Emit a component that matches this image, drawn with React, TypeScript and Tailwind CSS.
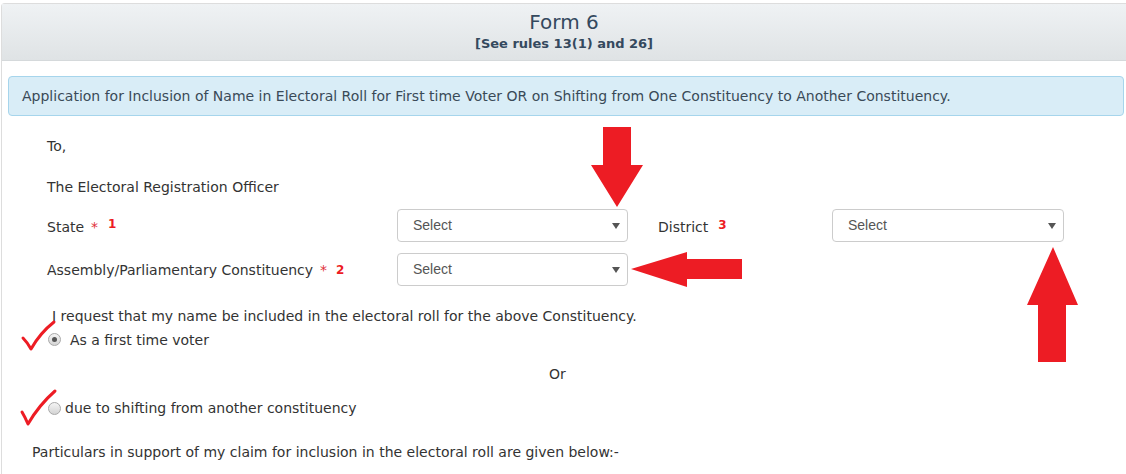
import React from 'react'

const RED = '#ed1c24'

function SelectBox({ width }: { width: string }) {
  return (
    <div className={`${width} h-[33px] rounded-[4px] border border-[#cccccc] bg-white flex items-center justify-between pl-[15px] pr-[7px] shrink-0`}>
      <span className="text-[14px] text-[#555555]" style={{ fontFamily: '"Liberation Sans", Arial, sans-serif' }}>Select</span>
      <svg width="8" height="6" viewBox="0 0 8 6"><path d="M0 0 H8 L4 6 Z" fill="#555555" /></svg>
    </div>
  )
}

function Radio({ checked }: { checked?: boolean }) {
  return (
    <span className="w-[13px] h-[13px] rounded-full border border-[#a9a9a9] bg-gradient-to-b from-[#f4f4f4] to-[#d4d4d4] flex items-center justify-center shrink-0">
      {checked && <span className="w-[5px] h-[5px] rounded-full bg-[#555555]" />}
    </span>
  )
}

function Arrows() {
  return (
    <svg className="absolute left-0 top-0 pointer-events-none" width="1126" height="474" viewBox="0 0 1126 474">
      <polygon fill={RED} points="603,127 631,127 631,165 643,165 617,207 591,165 603,165" />
      <polygon fill={RED} points="631,269 687,252 687,259 742,259 742,279 687,279 687,287" />
      <polygon fill={RED} points="1053,247 1078,305 1066,305 1066,362 1038,362 1038,305 1027,305" />
      <path d="M23 338 Q27 342 31 349 Q40 333 54 322" fill="none" stroke={RED} strokeWidth="3" strokeLinecap="round" strokeLinejoin="round" />
      <path d="M22 412 Q25 417 28 424 Q39 405 55 391" fill="none" stroke={RED} strokeWidth="3" strokeLinecap="round" strokeLinejoin="round" />
    </svg>
  )
}

export default function App() {
  return (
    <div className="relative w-[1126px] h-[474px] overflow-hidden bg-white text-[14px] text-[#333333]" style={{ fontFamily: '"DejaVu Sans", Verdana, sans-serif' }}>
      <div className="ml-[1px] mt-[3px] w-[1125px] h-[480px] border-l border-t border-[#dddddd] rounded-tl-[4px]">
        <div className="h-[57px] bg-gradient-to-b from-[#eff2f4] to-[#dfe3e5] border-b border-[#d5d9db] flex flex-col items-center text-[#34495e]">
          <div className="text-[20px] leading-[24px] mt-[6px]">Form 6</div>
          <div className="text-[13px] font-bold leading-[16px] mt-[2px]">[See rules 13(1) and 26]</div>
        </div>

        <div className="ml-[6px] mt-[15px] w-[1116px] h-[40px] rounded-[4px] border border-[#a6d5ec] bg-[#d9edf7] flex items-center pl-[13px] text-[#3a4a58]">
          Application for Inclusion of Name in Electoral Roll for First time Voter OR on Shifting from One Constituency to Another Constituency.
        </div>

        <div className="pl-[45px]">
          <div className="mt-[20px] h-[20px] flex items-center">To,</div>
          <div className="mt-[21px] h-[20px] flex items-center">The Electoral Registration Officer</div>

          <div className="mt-[12px] flex items-center">
            <div className="w-[350px] flex items-center pt-[3px]">
              <span>State</span>
              <span className="ml-[7px] text-[#e0303a]">*</span>
              <span className="ml-[10px] -mt-[6px] font-bold text-[12px]" style={{ color: RED }}>1</span>
            </div>
            <SelectBox width="w-[231px]" />
            <div className="ml-[30px] w-[174px] flex items-center pt-[3px]">
              <span>District</span>
              <span className="ml-[10px] -mt-[4px] font-bold text-[12px]" style={{ color: RED }}>3</span>
            </div>
            <SelectBox width="w-[232px]" />
          </div>

          <div className="mt-[11px] flex items-center">
            <div className="w-[350px] flex items-center pt-[2px]">
              <span>Assembly/Parliamentary Constituency</span>
              <span className="ml-[7px] text-[#e0303a]">*</span>
              <span className="ml-[9px] -mt-[2px] font-bold text-[12px]" style={{ color: RED }}>2</span>
            </div>
            <SelectBox width="w-[231px]" />
          </div>

          <div className="mt-[20px] h-[20px] flex items-center pl-[5px]">I request that my name be included in the electoral roll for the above Constituency.</div>
          <div className="mt-[3px] h-[20px] flex items-center pl-[1px]">
            <Radio checked />
            <span className="ml-[9px] pt-[2px]">As a first time voter</span>
          </div>

          <div className="mt-[15px] h-[20px] flex items-center pl-[502px]">Or</div>

          <div className="mt-[14px] h-[20px] flex items-center pl-[1px]">
            <Radio />
            <span className="ml-[4px] pt-[1px]">due to shifting from another constituency</span>
          </div>

          <div className="mt-[24px] h-[20px] flex items-center -ml-[15px]">Particulars in support of my claim for inclusion in the electoral roll are given below:-</div>
        </div>
      </div>
      <Arrows />
    </div>
  )
}
